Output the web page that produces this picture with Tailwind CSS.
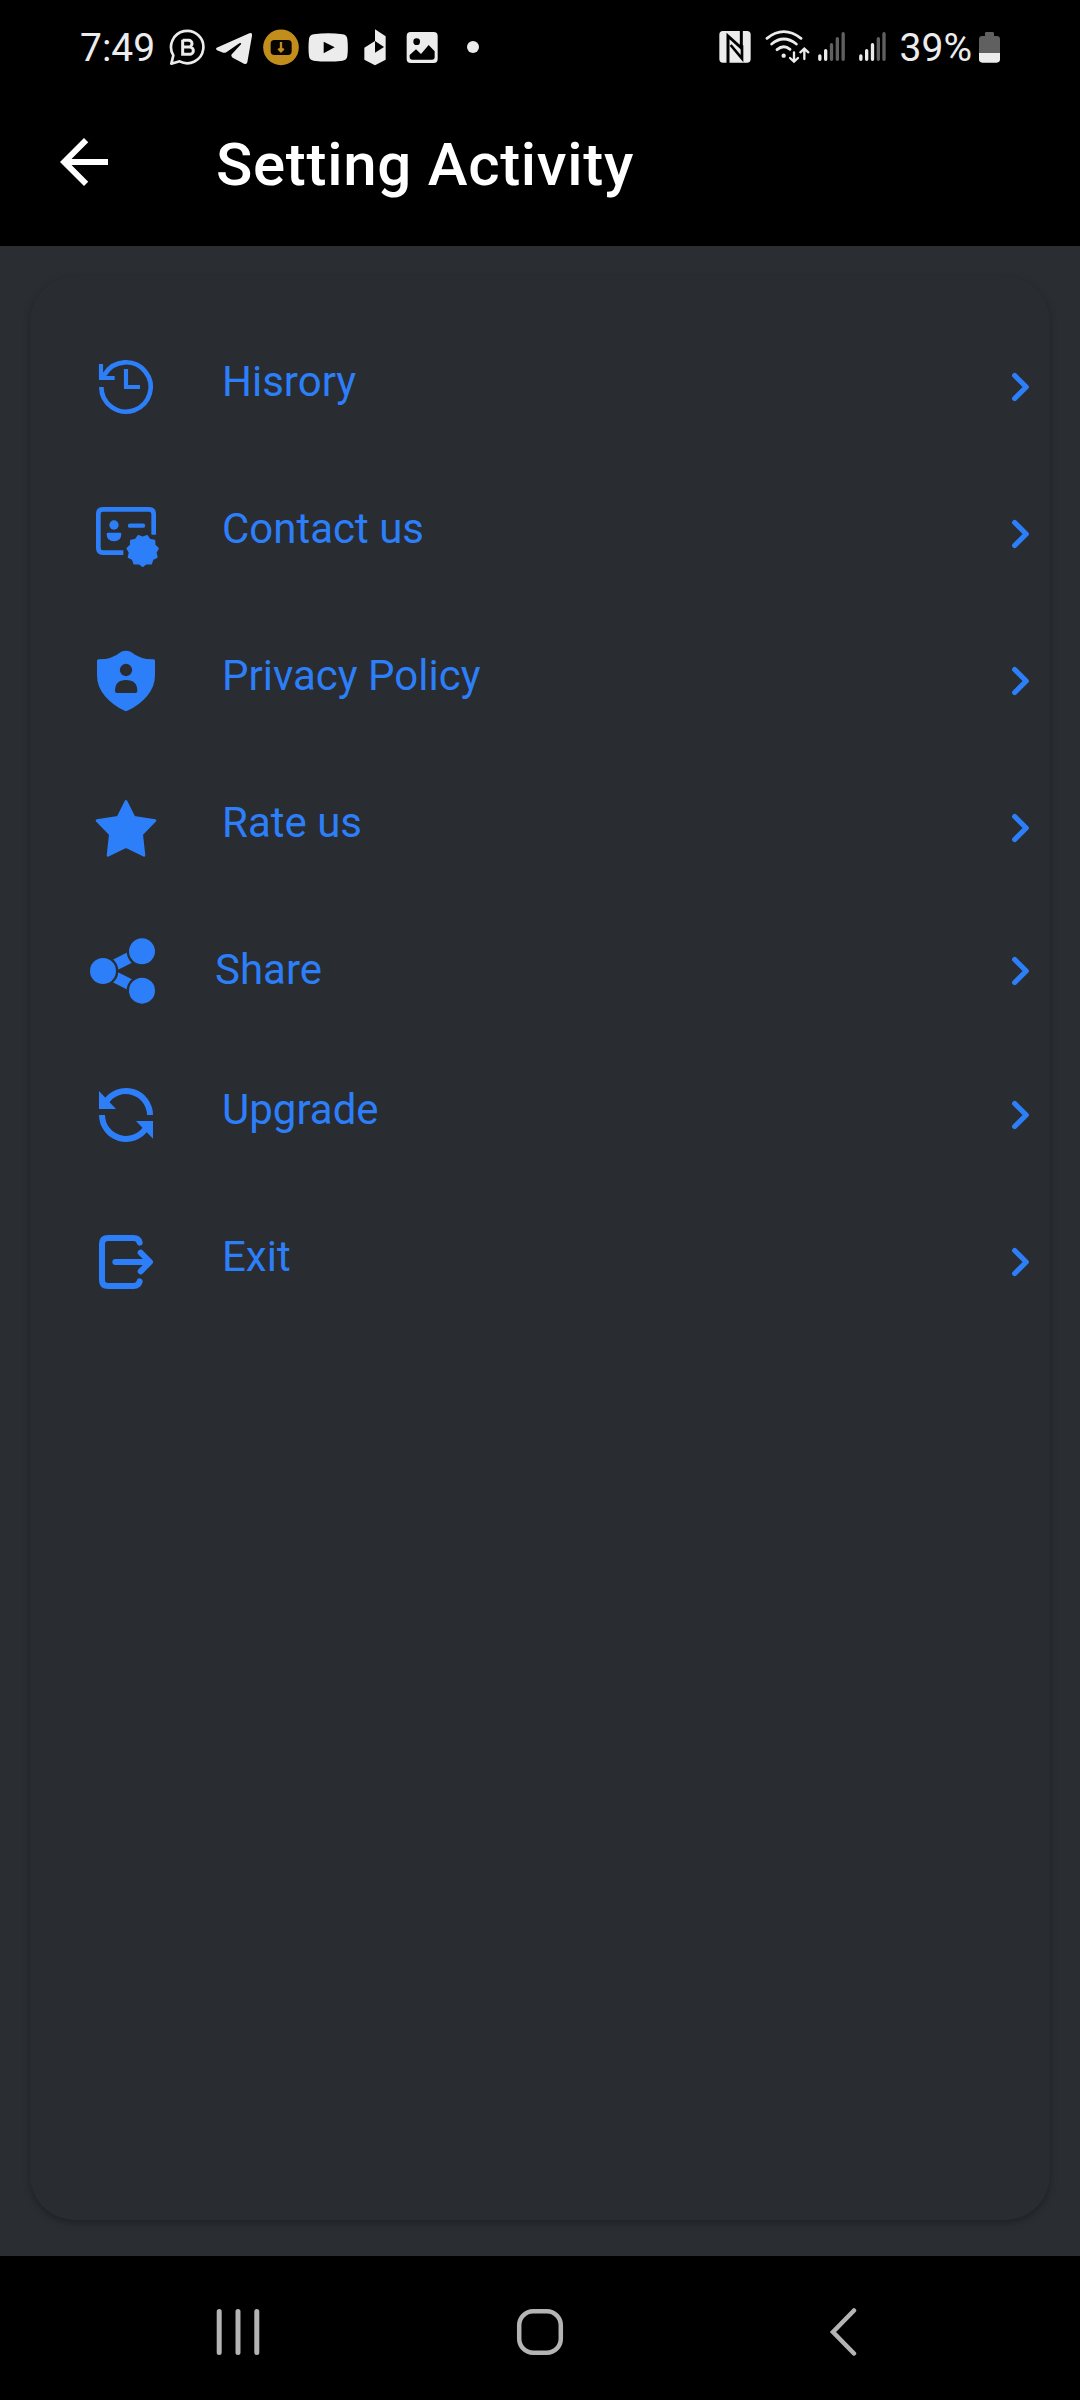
<!DOCTYPE html>
<html lang="en">
<head>
  <meta charset="UTF-8" />
  <meta name="viewport" content="width=device-width, initial-scale=1.0" />
  <title>Setting Activity</title>
  <script src="https://cdn.jsdelivr.net/npm/@tailwindcss/browser@4"></script>
</head>
<body class="bg-black font-['Roboto',sans-serif]">
  <div class="w-[1080px] h-[2400px] flex flex-col overflow-hidden">

    <!-- Status bar -->
    <div class="h-[84px] shrink-0 flex items-start justify-between pt-[27px] px-20 text-[#ececec]">
      <div class="flex items-center h-10">
        <span class="w-[88px] pt-0.5 text-[39px] leading-10">7:49</span>
        <!-- Business chat -->
        <svg class="w-[38px] h-10 mr-[10px]" viewBox="324 51 114 120" fill="none" stroke="currentColor" stroke-width="8">
          <path d="M334 161 L340 136 A48.500 48.500 0 1 1 359 154 Z" stroke-linejoin="round" />
          <path d="M368 89 V133 H389 A11 11 0 0 0 389 111 H368 M368 91 H386 A10 10 0 0 1 386 111" stroke-width="9" />
        </svg>
        <!-- Telegram -->
        <svg class="w-9 h-10 mr-[11px]" viewBox="469 51 108 120" fill="currentColor">
          <path d="M471 113 L569 70 Q578 67 577 77 L563 157 Q561 165 553 161 L519 143 Q512 138 517 132 L544 103 Q546 97 539 100 L500 127 Q494 130 487 127 L472 121 Q467 117 471 113Z" />
        </svg>
        <!-- Downloader -->
        <svg class="w-9 h-10 mr-[9px]" viewBox="610 51 108 120">
          <circle cx="664" cy="112" r="53.500" fill="#c28e1b" />
          <rect x="633" y="90" width="63" height="45" rx="11" fill="#080500" />
          <path d="M664 96 V120 M656 116 L664 124 L672 116" fill="none" stroke="#c28e1b" stroke-width="7" />
        </svg>
        <!-- YouTube -->
        <svg class="w-10 h-10 mr-[15px]" viewBox="745 51 120 120">
          <path d="M762 73 Q805 67 849 73 Q862 75 863 87 Q866 112 863 138 Q862 150 849 152 Q805 157 762 152 Q749 150 748 138 Q745 112 748 87 Q749 75 762 73Z" fill="currentColor" />
          <path d="M792 95 L825 112 L792 130Z" fill="#000" />
        </svg>
        <svg class="w-6 h-10 mr-[19px]" viewBox="910 51 72 120">
          <path d="M946 58 L978 79 V149 L946 166 L914 149 V113 L946 93Z" fill="currentColor" />
          <path d="M946 93 L973 111 L946 128Z" fill="#000" />
        </svg>
        <!-- Gallery -->
        <svg class="w-8 h-10 mr-[29px]" viewBox="1039 51 96 120">
          <rect x="1041" y="66" width="93" height="93" rx="12" fill="currentColor" />
          <circle cx="1071" cy="95" r="10" fill="#000" />
          <path d="M1050 135 L1069 118 L1084 132 L1107 105 L1125 124 V141 Q1125 149 1117 149 H1058 Q1050 149 1050 141Z" fill="#000" />
        </svg>
        <span class="size-3 rounded-full bg-current"></span>
      </div>

      <div class="flex items-center h-10">
        <!-- NFC -->
        <svg class="w-8 h-10 mr-[14px]" viewBox="56 51 96 120">
          <rect x="57" y="63" width="94" height="95" rx="11" fill="currentColor" />
          <path d="M83 160 V78 L123 114 V62" fill="none" stroke="#000" stroke-width="9" />
          <path d="M91 105 L125 146 V106" fill="none" stroke="#000" stroke-width="8" />
        </svg>
        <!-- Wi-Fi with traffic arrows -->
        <svg class="w-[45px] h-10 mr-[7px]" viewBox="193 51 135 120" fill="none" stroke="currentColor" stroke-width="8.500" stroke-linecap="round">
          <path d="M199 85 Q249 45 301 85" />
          <path d="M213 102 Q249 72 287 102" />
          <path d="M229 119 Q249 102 268 118" />
          <circle cx="249" cy="137" r="6.500" fill="currentColor" stroke="none" />
          <path d="M280 127 V154 M268 144 L280 155 L292 144 M311 147 V118 M299 127 L311 116 L323 127" stroke-width="7" />
        </svg>
        <!-- Signal, SIM 1 and SIM 2 -->
        <svg class="w-[29px] h-10 mr-3" viewBox="351 51 87 120" stroke-width="10" stroke-linecap="round">
          <path d="M359.500 138 V148 M377 122 V148" stroke="currentColor" />
          <path d="M394.500 104 V148 M412 86 V148 M429.500 71 V148" stroke="#606060" />
        </svg>
        <svg class="w-[29px] h-10 mr-[13px]" viewBox="474 51 87 120" stroke-width="10" stroke-linecap="round">
          <path d="M482.500 138 V148 M500 122 V148 M517.500 104 V148" stroke="currentColor" />
          <path d="M535 86 V148 M552 71 V148" stroke="#606060" />
        </svg>
        <span class="mr-[7px] pt-0.5 text-[39px] leading-10">39%</span>
        <!-- Battery -->
        <svg class="w-[21px] h-10" viewBox="837 51 63 120">
          <path d="M837 130 V88 Q837 78 847 78 H855 V70 Q855 66 859 66 H878 Q882 66 882 70 V78 H890 Q900 78 900 88 V130Z" fill="#606060" />
          <path d="M837 129 H900 V148 Q900 158 890 158 H847 Q837 158 837 148Z" fill="currentColor" />
        </svg>
      </div>
    </div>

    <!-- App bar -->
    <div class="h-[162px] shrink-0 flex items-start pt-[42px] pl-12 text-white">
      <svg class="size-[72px]" viewBox="0 0 24 24" fill="currentColor">
        <path d="M20 11H7.830l5.590-5.590L12 4l-8 8 8 8 1.410-1.410L7.830 13H20v-2z" />
      </svg>
      <h1 class="ml-24 text-[60px] leading-[77px] font-medium tracking-[0.7px]">Setting Activity</h1>
    </div>

    <!-- Settings list -->
    <main class="h-[2010px] shrink-0 bg-[#2a2d31] px-[30px] pt-[30px] pb-9">
      <ul class="h-full rounded-[45px] bg-[#292c30] pt-[37px] text-[#2c7ff8] text-[42px] leading-[50px] shadow-[0_3px_7px_rgba(0,0,0,0.25)]">
        <li class="h-[147px] flex items-center pl-[60px] pr-[15px]">
          <svg class="size-[72px]" viewBox="60 63 216 216" fill="none" stroke="currentColor" stroke-width="14">
            <path d="M94 171 A74 74 0 1 0 105 132 L94 146" />
            <path d="M93 102 V144 H134" stroke-width="12.500" />
            <path d="M168 117 V171 H210" stroke-width="12.500" />
          </svg>
          <span class="ml-[60px] pb-[10px] grow">Hisrory</span>
          <svg class="size-9" viewBox="0 0 36 36" fill="none" stroke="currentColor" stroke-width="5.300" stroke-linecap="round" stroke-linejoin="round"><path d="M15.700 6.500 L27.200 18 L15.700 29.500" /></svg>
        </li>
        <li class="h-[147px] flex items-center pl-[60px] pr-[15px]">
          <svg class="size-[72px]" viewBox="60 504 216 216" fill="none" stroke="currentColor">
            <path d="M160 668 H99 Q85 668 85 654 V552 Q85 538 99 538 H237 Q251 538 251 552 V614" stroke-width="14" />
            <circle cx="132" cy="585" r="14" fill="currentColor" stroke="none" />
            <path d="M114 608 H150 Q154 608 154 612 Q154 634 132 634 Q110 634 110 612 Q110 608 114 608Z" fill="currentColor" stroke="none" />
            <path d="M180 587 H219" stroke-width="13" stroke-linecap="round" />
            <circle cx="218" cy="662" r="55" fill="#292c30" stroke="none" />
            <path transform="translate(218 662)" d="M0 46 L11 37.400 L24.900 38.700 L29.500 25.500 L41.800 19.100 L38.600 5.600 L45.500 -6.600 L35.500 -16.200 L34.800 -30.100 L21.100 -32.800 L13 -44.100 L0 -39 L-13 -44.100 L-21.100 -32.800 L-34.800 -30.100 L-35.500 -16.200 L-45.500 -6.600 L-38.600 5.600 L-41.800 19.100 L-29.500 25.500 L-24.900 38.700 L-11 37.400Z" fill="currentColor" stroke-width="6" stroke-linejoin="round" />
          </svg>
          <span class="ml-[60px] pb-[10px] grow">Contact us</span>
          <svg class="size-9" viewBox="0 0 36 36" fill="none" stroke="currentColor" stroke-width="5.300" stroke-linecap="round" stroke-linejoin="round"><path d="M15.700 6.500 L27.200 18 L15.700 29.500" /></svg>
        </li>
        <li class="h-[147px] flex items-center pl-[60px] pr-[15px]">
          <svg class="size-[72px]" viewBox="60 75 216 216" fill="currentColor">
            <path d="M154 95 Q168 90 182 95 Q212 119 251 118 Q255 118 255 123 V165 Q255 200 232 227 Q208 256 172 272 Q168 274 164 272 Q128 256 104 227 Q81 200 81 165 V123 Q81 118 85 118 Q124 119 154 95Z" />
            <circle cx="168" cy="150" r="18.500" fill="#292c30" />
            <path d="M135 213 Q135 180 168 180 Q202 180 202 213 Q202 219 196 219 H141 Q135 219 135 213Z" fill="#292c30" />
          </svg>
          <span class="ml-[60px] pb-[10px] grow">Privacy Policy</span>
          <svg class="size-9" viewBox="0 0 36 36" fill="none" stroke="currentColor" stroke-width="5.300" stroke-linecap="round" stroke-linejoin="round"><path d="M15.700 6.500 L27.200 18 L15.700 29.500" /></svg>
        </li>
        <li class="h-[147px] flex items-center pl-[60px] pr-[15px]">
          <svg class="size-[72px]" viewBox="60 516 216 216" fill="currentColor" stroke="currentColor" stroke-width="8" stroke-linejoin="round">
            <path d="M168 544 L192 592 L255 602 L215 643 L222 706 L168 680 L114 706 L121 643 L81 602 L144 592Z" />
          </svg>
          <span class="ml-[60px] pb-[10px] grow">Rate us</span>
          <svg class="size-9" viewBox="0 0 36 36" fill="none" stroke="currentColor" stroke-width="5.300" stroke-linecap="round" stroke-linejoin="round"><path d="M15.700 6.500 L27.200 18 L15.700 29.500" /></svg>
        </li>
        <li class="h-[140px] flex items-center pl-[56px] pr-[15px]">
          <svg class="size-[72px]" viewBox="48 76 216 216" fill="currentColor">
            <path d="M216 125 L99 184 L216 243" fill="none" stroke="currentColor" stroke-width="34" />
            <g fill="#292c30">
              <circle cx="99" cy="184" r="46" />
              <circle cx="216" cy="125" r="46" />
              <circle cx="216" cy="243" r="46" />
              <path d="M138 184 L156 177 V191Z" />
            </g>
            <circle cx="99" cy="184" r="39" />
            <circle cx="216" cy="125" r="39" />
            <circle cx="216" cy="243" r="39" />
          </svg>
          <span class="ml-[57px] pb-0.5 grow">Share</span>
          <svg class="size-9" viewBox="0 0 36 36" fill="none" stroke="currentColor" stroke-width="5.300" stroke-linecap="round" stroke-linejoin="round"><path d="M15.700 6.500 L27.200 18 L15.700 29.500" /></svg>
        </li>
        <li class="h-[147px] flex items-center pl-[60px] pr-[15px]">
          <svg class="size-[72px]" viewBox="60 507 216 216" fill="none" stroke="currentColor" stroke-width="18">
            <path d="M240 615 A72 72 0 0 0 107 577" />
            <path d="M96 615 A72 72 0 0 0 229 653" />
            <path d="M87 543 V597 H138Z M249 686 V633 H198Z" fill="currentColor" stroke="none" />
          </svg>
          <span class="ml-[60px] pb-[10px] grow">Upgrade</span>
          <svg class="size-9" viewBox="0 0 36 36" fill="none" stroke="currentColor" stroke-width="5.300" stroke-linecap="round" stroke-linejoin="round"><path d="M15.700 6.500 L27.200 18 L15.700 29.500" /></svg>
        </li>
        <li class="h-[147px] flex items-center pl-[60px] pr-[15px]">
          <svg class="size-[72px]" viewBox="60 78 216 216" fill="none" stroke="currentColor" stroke-width="18" stroke-linecap="round" stroke-linejoin="round">
            <path d="M209 128 Q206 114 190 114 H114 Q96 114 96 132 V240 Q96 258 114 258 H190 Q206 258 209 244" />
            <path d="M136 186 H238 M212 158 L240 186 L212 214" />
          </svg>
          <span class="ml-[60px] pb-[10px] grow">Exit</span>
          <svg class="size-9" viewBox="0 0 36 36" fill="none" stroke="currentColor" stroke-width="5.300" stroke-linecap="round" stroke-linejoin="round"><path d="M15.700 6.500 L27.200 18 L15.700 29.500" /></svg>
        </li>
      </ul>
    </main>

    <!-- Navigation bar -->
    <nav class="h-[144px] shrink-0 flex justify-between pt-[52px] px-[214px] text-[#b4b4b4]">
      <svg class="size-12" viewBox="0 0 48 48" stroke="currentColor" stroke-width="5" stroke-linecap="round">
        <path d="M5.200 3.500 V44.500 M24 3.500 V44.500 M42.800 3.500 V44.500" />
      </svg>
      <svg class="size-12" viewBox="0 0 48 48" fill="none" stroke="currentColor" stroke-width="4.500">
        <rect x="3.200" y="3.200" width="41.600" height="41.600" rx="14" />
      </svg>
      <svg class="size-12" viewBox="0 0 48 48" fill="none" stroke="currentColor" stroke-width="4.500" stroke-linecap="round">
        <path d="M36 2.500 L15 24 L36 45.500" />
      </svg>
    </nav>
  </div>
</body>
</html>
